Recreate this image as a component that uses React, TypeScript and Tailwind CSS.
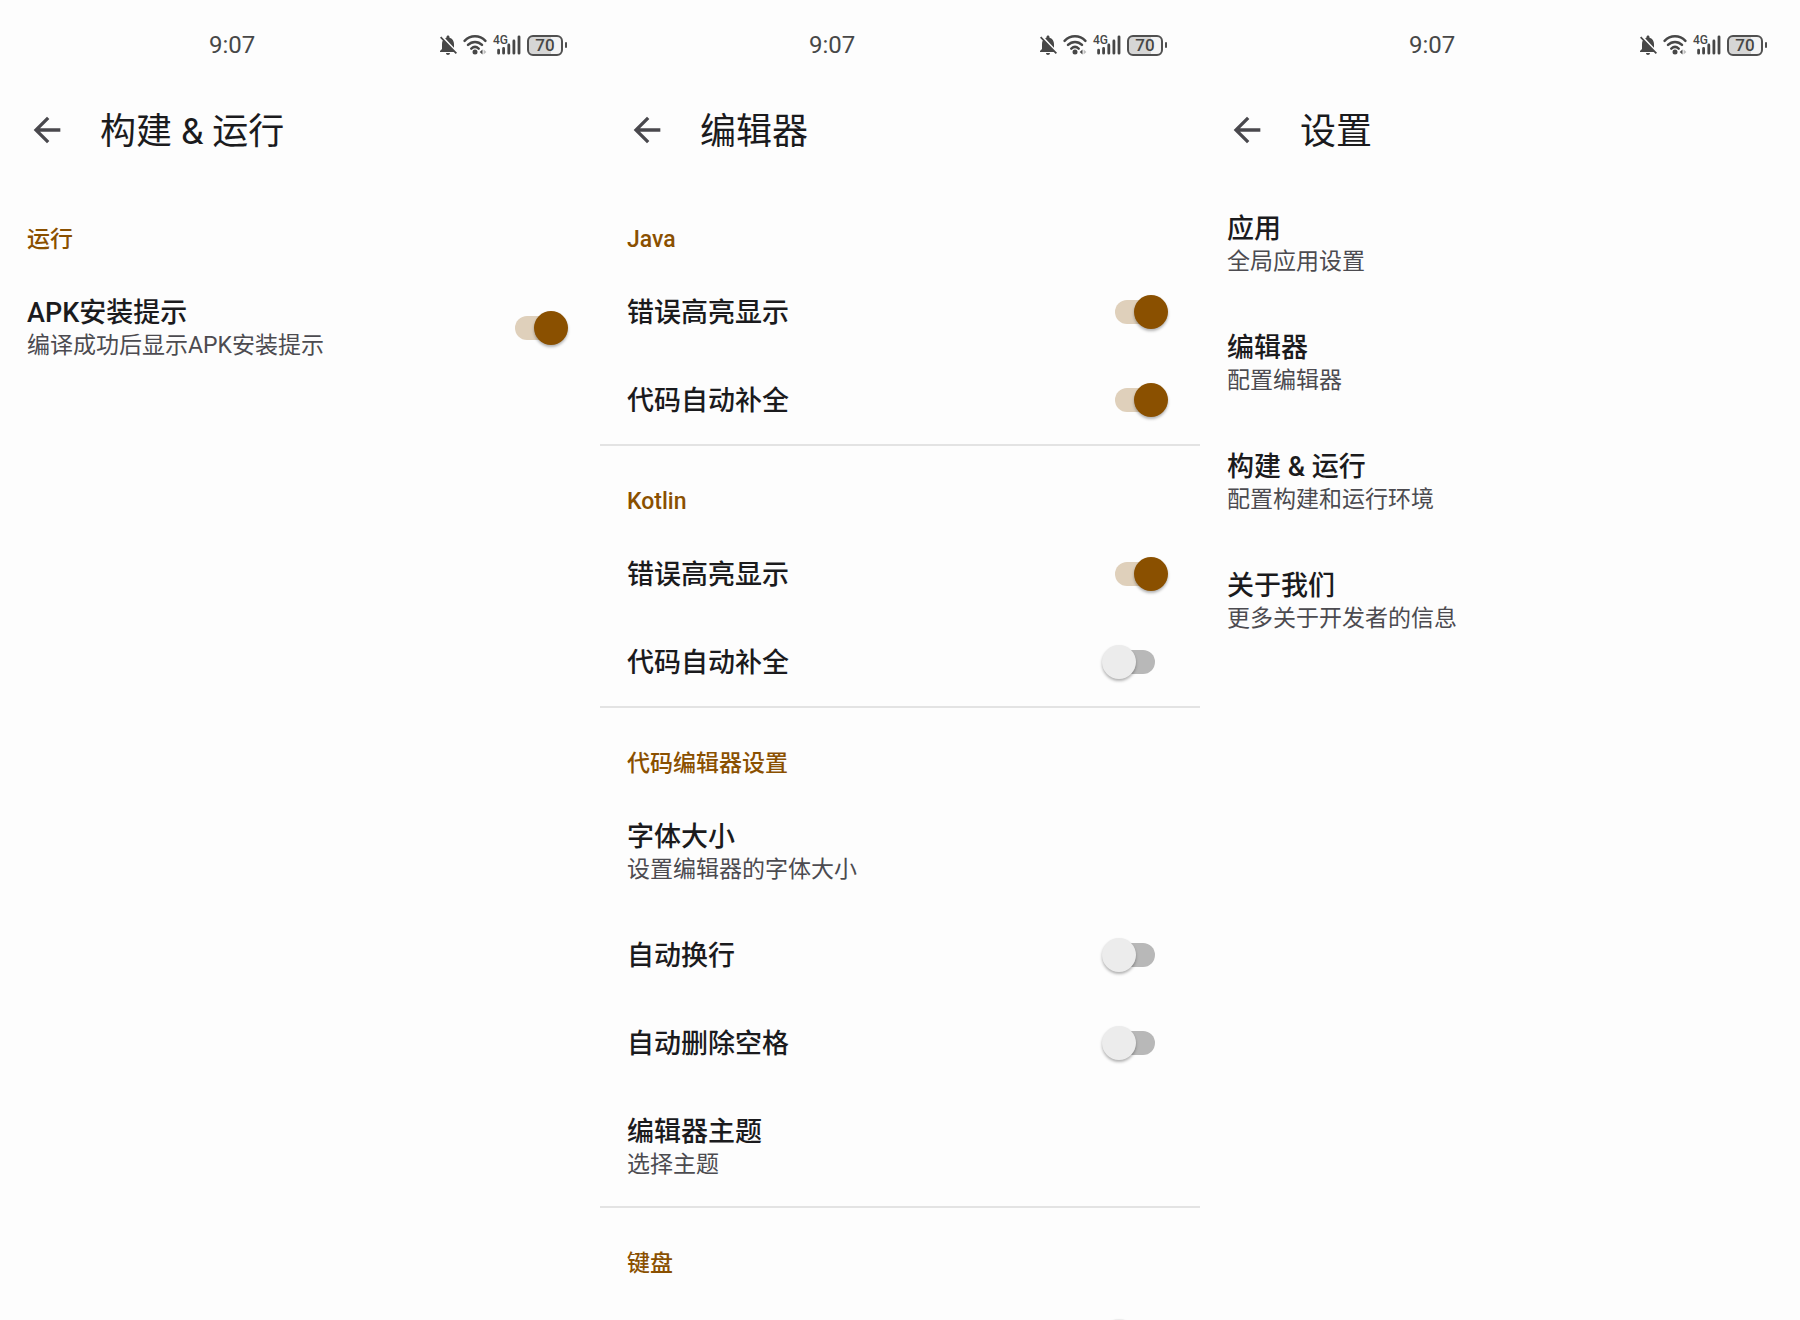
import React, { useState } from 'react';
import { MdArrowBack, MdNotificationsOff } from 'react-icons/md';

interface Item {
  title: string;
  summary?: string;
  checked?: boolean;
  label?: string;
}

interface Group {
  name?: string;
  items: Item[];
}

interface ScreenProps {
  title: string;
  groups: Group[];
}

const BUILD_GROUPS: Group[] = [
  {
    name: '运行',
    items: [{ title: 'APK安装提示', summary: '编译成功后显示APK安装提示', checked: true }],
  },
];

const EDITOR_GROUPS: Group[] = [
  {
    name: 'Java',
    items: [
      { title: '错误高亮显示', checked: true },
      { title: '代码自动补全', checked: true },
    ],
  },
  {
    name: 'Kotlin',
    items: [
      { title: '错误高亮显示', checked: true },
      { title: '代码自动补全', checked: false },
    ],
  },
  {
    name: '代码编辑器设置',
    items: [
      { title: '字体大小', summary: '设置编辑器的字体大小' },
      { title: '自动换行', checked: false },
      { title: '自动删除空格', checked: false },
      { title: '编辑器主题', summary: '选择主题' },
    ],
  },
  {
    name: '键盘',
    items: [{ title: '', label: '键盘', checked: false }],
  },
];

const SETTINGS_GROUPS: Group[] = [
  {
    items: [
      { title: '应用', summary: '全局应用设置' },
      { title: '编辑器', summary: '配置编辑器' },
      { title: '构建 & 运行', summary: '配置构建和运行环境' },
      { title: '关于我们', summary: '更多关于开发者的信息' },
    ],
  },
];

const WifiIcon: React.FC = () => (
  <svg viewBox="0 0 24 20" className="h-5 w-6" fill="none" stroke="currentColor" strokeWidth="2.5" strokeLinecap="round">
    <path d="M1.6 5.8C7.4-.2 16.6-.2 22.4 5.8" />
    <path d="M5 9.9c4-4 10-4 14 0" />
    <path d="M8.3 13.6c2.2-2 5.2-2 7.4 0" />
    <circle cx="12" cy="17" r="2.5" fill="currentColor" stroke="none" />
    <path d="M19.5 14.6v5l-2.8-2.5z" fill="currentColor" stroke="none" />
    <path d="M20.6 14.6v5l2.8-2.5z" fill="currentColor" stroke="none" opacity="0.35" />
  </svg>
);

const SignalIcon: React.FC = () => (
  <span className="relative block h-5 w-7">
    <span className="absolute -top-px left-0 text-[12px] leading-[12px] font-medium">4G</span>
    <svg viewBox="0 0 28 20" className="h-5 w-7" stroke="currentColor" strokeWidth="2.8" strokeLinecap="round">
      <path d="M5.6 15.2v3M10.6 13.4v4.8M15.8 10v8.2M20.9 6v12.2M26 1.8v16.4" />
    </svg>
  </span>
);

const BatteryIcon: React.FC = () => (
  <span className="flex items-center gap-0.5">
    <span className="flex h-[21px] w-9 items-center justify-center rounded-md border-2 border-[#505050] bg-linear-to-r from-[#d6d6d6] from-70% to-[#f4f4f4] to-70% text-[17px] leading-[17px] font-medium">
      70
    </span>
    <span className="h-1.5 w-0.5 rounded-full bg-[#505050]" />
  </span>
);

const StatusBar: React.FC = () => (
  <div className="flex h-[90px] items-center justify-between pr-[33px] pl-[209px] text-[#474747]">
    <span className="text-2xl">9:07</span>
    <div className="flex items-center gap-1.5">
      <MdNotificationsOff viewBox="3 2 18 20" className="h-5 w-[18px]" />
      <WifiIcon />
      <SignalIcon />
      <BatteryIcon />
    </div>
  </div>
);

const Row: React.FC<{ item: Item }> = ({ item }) => {
  const [on, setOn] = useState(item.checked ?? false);
  const rowClass = `flex w-full items-center justify-between pr-8 pl-[27px] text-left ${item.summary ? 'h-[119px]' : 'h-[88px]'}`;

  const text = (
    <span className={item.summary ? 'block' : 'block pt-0.5'}>
      <span className="block text-[27px] leading-9 font-medium text-[#1b1b1d]">{item.title}</span>
      {item.summary && <span className="block text-[23px] leading-[30px] text-[#4c4b50]">{item.summary}</span>}
    </span>
  );

  if (item.checked === undefined) {
    return <button type="button" className={rowClass}>{text}</button>;
  }

  return (
    <label className={rowClass}>
      {text}
      <input
        type="checkbox"
        role="switch"
        aria-label={item.label}
        checked={on}
        onChange={(e) => setOn(e.target.checked)}
        className="relative h-[34px] w-[66px] shrink-0 appearance-none before:absolute before:top-[5px] before:left-[13px] before:h-6 before:w-10 before:rounded-full before:bg-[#b8b8b8] after:absolute after:top-0 after:left-0 after:size-[34px] after:rounded-full after:bg-[#ececec] after:shadow-[0_2px_3px_rgba(0,0,0,0.3)] checked:before:bg-[#dfd0bb] checked:after:left-8 checked:after:bg-[#8a5000]"
      />
    </label>
  );
};

const Screen: React.FC<ScreenProps> = ({ title, groups }) => (
  <main className="min-w-0">
    <StatusBar />
    <header className="mb-3.5 flex h-20 items-center gap-[33px] pl-[27px]">
      <button type="button" aria-label="返回" className="text-[#49484d]">
        <MdArrowBack className="size-10" />
      </button>
      <h1 className="pt-1 text-4xl text-[#1b1b1d]">{title}</h1>
    </header>
    {groups.map((group, i) => (
      <section key={i} className={i < groups.length - 1 ? 'border-b-2 border-[#e3e3e3]' : ''}>
        {group.name && (
          <h2 className="h-[84px] pt-10 pl-[27px] text-[23px] leading-8 font-medium text-[#8a5000]">{group.name}</h2>
        )}
        {group.items.map((item, j) => (
          <Row key={j} item={item} />
        ))}
      </section>
    ))}
  </main>
);

const App: React.FC = () => (
  <div className="grid h-screen grid-cols-3 overflow-hidden bg-[#fdfdfd] font-[Roboto,'Noto_Sans_CJK_SC',sans-serif]">
    <Screen title="构建 & 运行" groups={BUILD_GROUPS} />
    <Screen title="编辑器" groups={EDITOR_GROUPS} />
    <Screen title="设置" groups={SETTINGS_GROUPS} />
  </div>
);

export default App;
